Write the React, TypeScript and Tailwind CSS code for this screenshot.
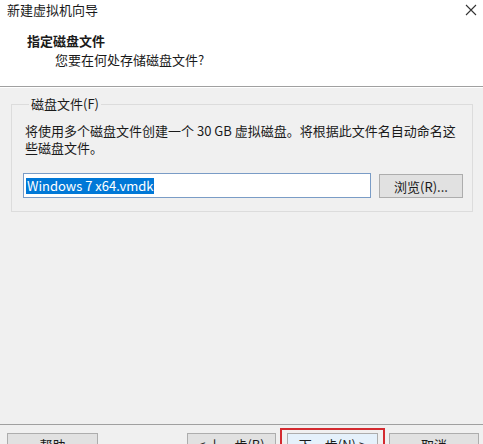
const FONT = "font-['Segoe_UI','Noto_Sans_CJK_SC',sans-serif]";

function Btn({ label, className = '' }: { label: string; className?: string }) {
  return (
    <div
      className={`h-[23px] flex items-center justify-center border border-[#adadad] bg-[#e1e1e1] text-[13px] leading-none text-[#1a1a1a] ${className}`}
    >
      {label}
    </div>
  );
}

export default function App() {
  return (
    <div className={`${FONT} w-[483px] h-[444px] overflow-hidden flex flex-col bg-[#f0f0f0] text-[#1a1a1a]`}>
      {/* header */}
      <div className="h-[86px] shrink-0 bg-white flex flex-col">
        <div className="h-[19px] flex items-center justify-between pl-[7px] pr-[6px] text-[13px]">
          <span>新建虚拟机向导</span>
          <svg width="12" height="12" viewBox="0 0 12 12" className="mt-[1px]">
            <path d="M1 1L11 11M11 1L1 11" stroke="#333" strokeWidth="1.1" />
          </svg>
        </div>
        <div className="pl-[27px] mt-[13px] text-[13px] leading-[17px] font-bold">指定磁盘文件</div>
        <div className="pl-[55px] mt-[2px] text-[13px] leading-[17px]">您要在何处存储磁盘文件?</div>
      </div>
      <div className="h-[2px] shrink-0 border-t border-[#a0a0a0] border-b border-b-white" />

      {/* body */}
      <div className="flex-1 pt-[8px] pl-[11px] pr-[10px]">
        <fieldset className="border border-[#dcdcdc] pl-[13px] pr-[9px] pt-[10px] pb-[13px]">
          <legend className="ml-[4px] px-[2px] text-[13px] leading-[16px]">磁盘文件(F)</legend>
          <p className="text-[13px] leading-[17px]">
            将使用多个磁盘文件创建一个 30 GB 虚拟磁盘。将根据此文件名自动命名这些磁盘文件。
          </p>
          <div className="mt-[17px] -ml-[2px] flex gap-[8px]">
            <div className="w-[348px] h-[25px] border border-[#7a9cc6] bg-white flex items-center pl-[2px]">
              <span className="font-['Noto_Sans_CJK_SC',sans-serif] bg-[#0078d7] text-white text-[13px] leading-[16px] px-[1px]">
                Windows 7 x64.vmdk
              </span>
            </div>
            <Btn label="浏览(R)..." className="w-[84px] h-[24px] mt-[1px]" />
          </div>
        </fieldset>
      </div>

      {/* footer */}
      <div className="h-[20px] shrink-0 border-t border-[#a0a0a0] relative">
        <div className="flex items-start pt-[8px]">
          <Btn label="帮助" className="ml-[7px] w-[91px]" />
          <Btn label="< 上一步(B)" className="ml-[89px] w-[89px]" />
          <div className="ml-[4px] -mt-[5px] border-2 border-[#d42a2f] px-[5px] pt-[3px]">
            <Btn label="下一步(N) >" className="w-[91px] border-[#0078d7] bg-[#e5f1fb]" />
          </div>
          <Btn label="取消" className="ml-[4px] w-[90px]" />
        </div>
      </div>
    </div>
  );
}
